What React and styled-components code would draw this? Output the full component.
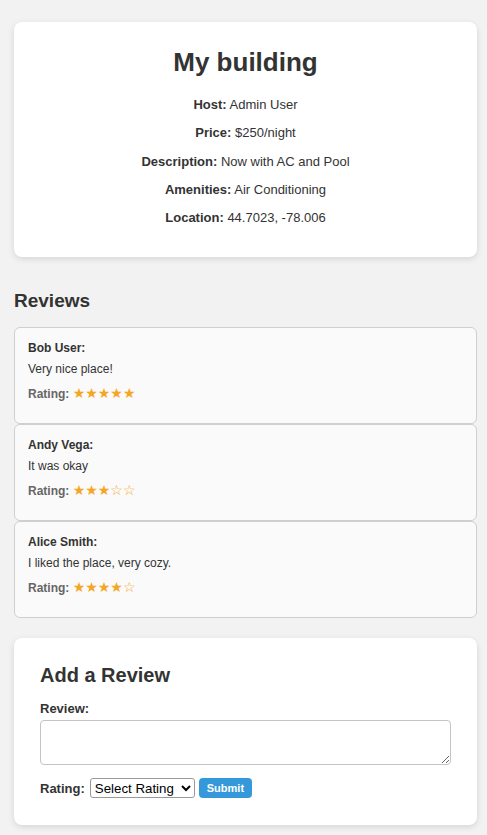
import React from "react";
import styled, { createGlobalStyle } from "styled-components";

const GlobalStyle = createGlobalStyle`
  body {
    margin: 0;
    background: #f2f2f2;
    font-family: "Liberation Sans", Arial, sans-serif;
    font-size: 13px;
    color: #333;
  }
`;

const reviews = [
  { name: "Bob User", text: "Very nice place!", rating: 5 },
  { name: "Andy Vega", text: "It was okay", rating: 3 },
  { name: "Alice Smith", text: "I liked the place, very cozy.", rating: 4 },
];

const App = () => {
  return (
    <>
      <GlobalStyle />
      <Page>
        {/* listing details */}
        <InfoCard>
          <Title>My building</Title>
          <InfoLine>
            <b>Host:</b> Admin User
          </InfoLine>
          <InfoLine>
            <b>Price:</b> $250/night
          </InfoLine>
          <InfoLine>
            <b>Description:</b> Now with AC and Pool
          </InfoLine>
          <InfoLine>
            <b>Amenities:</b> Air Conditioning
          </InfoLine>
          <InfoLine>
            <b>Location:</b> 44.7023, -78.006
          </InfoLine>
        </InfoCard>

        <SectionTitle>Reviews</SectionTitle>
        <ReviewList>
          {reviews.map((r) => (
            <ReviewCard key={r.name}>
              <ReviewName>{r.name}:</ReviewName>
              <ReviewText>{r.text}</ReviewText>
              <RatingLine>
                Rating:{" "}
                <Stars>
                  {"★".repeat(r.rating)}
                  {"☆".repeat(5 - r.rating)}
                </Stars>
              </RatingLine>
            </ReviewCard>
          ))}
        </ReviewList>

        {/* review form */}
        <FormCard>
          <FormTitle>Add a Review</FormTitle>
          <Label htmlFor="review">Review:</Label>
          <TextArea id="review" />
          <FormRow>
            <Label as="span">Rating:</Label>
            <Select defaultValue="">
              <option value="">Select Rating</option>
              <option value="1">1</option>
              <option value="2">2</option>
              <option value="3">3</option>
              <option value="4">4</option>
              <option value="5">5</option>
            </Select>
            <SubmitButton type="button">Submit</SubmitButton>
          </FormRow>
        </FormCard>
      </Page>
    </>
  );
};

const Page = styled.div`
  display: flex;
  flex-direction: column;
  padding: 22px 10px 10px 14px;
`;

const InfoCard = styled.section`
  background: #fff;
  border-radius: 8px;
  box-shadow: 0 2px 6px rgba(0, 0, 0, 0.12);
  padding: 25px 20px 19px;
  text-align: center;
`;

const Title = styled.h1`
  font-size: 26px;
  margin: 0 0 19px;
`;

const InfoLine = styled.p`
  margin: 13px 0;
  line-height: 15.25px;

  b {
    font-weight: bold;
  }
`;

const SectionTitle = styled.h2`
  font-size: 19px;
  margin: 33px 0 15px;
`;

const ReviewList = styled.div`
  display: flex;
  flex-direction: column;
`;

const ReviewCard = styled.div`
  background: #fafafa;
  border: 1px solid #cfcfcf;
  border-radius: 6px;
  padding: 13px 13px 21px;
  font-size: 12px;
`;

const ReviewName = styled.p`
  margin: 0 0 7px;
  font-weight: bold;
`;

const ReviewText = styled.p`
  margin: 0 0 9px;
`;

const RatingLine = styled.p`
  margin: 0;
  font-weight: bold;
  color: #666;
  line-height: 16px;
`;

const Stars = styled.span`
  font-family: "DejaVu Sans", sans-serif;
  font-weight: normal;
  font-size: 14px;
  color: #f5a623;
`;

const FormCard = styled.section`
  margin-top: 20px;
  background: #fff;
  border-radius: 8px;
  box-shadow: 0 2px 6px rgba(0, 0, 0, 0.12);
  padding: 26px 26px 27px;
`;

const FormTitle = styled.h2`
  font-size: 20px;
  margin: 0 0 14px;
`;

const Label = styled.label`
  display: block;
  font-weight: bold;
  margin-bottom: 4px;
`;

const TextArea = styled.textarea`
  display: block;
  box-sizing: border-box;
  width: 100%;
  height: 45px;
  border: 1px solid #c4c4c4;
  border-radius: 4px;
  font-family: inherit;
`;

const FormRow = styled.div`
  display: flex;
  align-items: center;
  gap: 4px;
  margin-top: 13px;

  ${Label} {
    margin: 0 1px 0 0;
  }
`;

const Select = styled.select`
  box-sizing: border-box;
  width: 105px;
  font-family: "Liberation Sans", Arial, sans-serif;
  font-size: 13.3px;
  height: 20px;
  color: #000;
  background: #fff;
  border: 1px solid #999;
  border-radius: 3px;
`;

const SubmitButton = styled.button`
  background: #3498db;
  color: #fff;
  border: none;
  border-radius: 4px;
  font-family: inherit;
  font-weight: bold;
  font-size: 11px;
  padding: 4px 8px;
  height: 20px;
`;

export default App;
